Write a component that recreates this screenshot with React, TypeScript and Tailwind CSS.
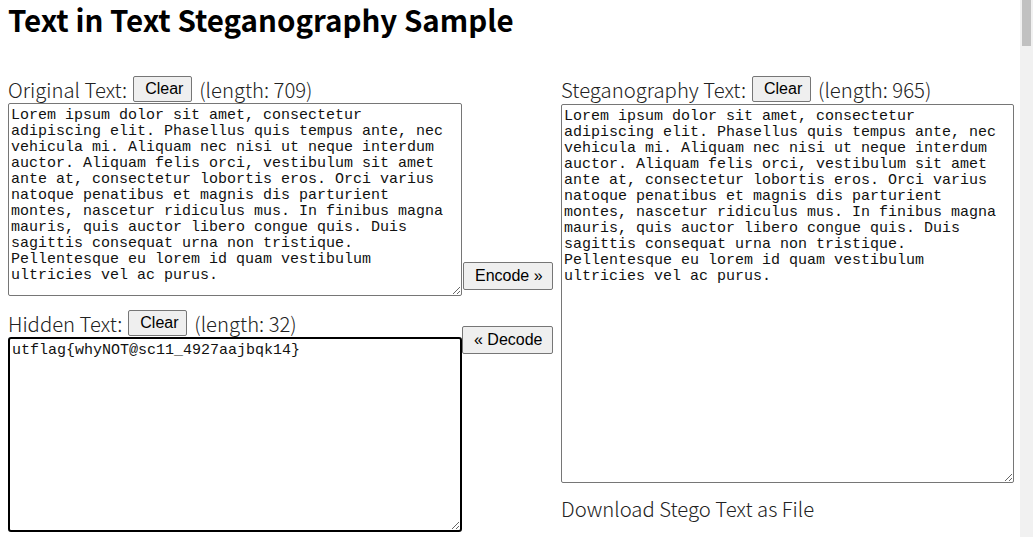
import React from "react";

const lorem =
  "Lorem ipsum dolor sit amet, consectetur adipiscing elit. Phasellus quis tempus ante, nec vehicula mi. Aliquam nec nisi ut neque interdum auctor. Aliquam felis orci, vestibulum sit amet ante at, consectetur lobortis eros. Orci varius natoque penatibus et magnis dis parturient montes, nascetur ridiculus mus. In finibus magna mauris, quis auctor libero congue quis. Duis sagittis consequat urna non tristique. Pellentesque eu lorem id quam vestibulum ultricies vel ac purus.";

const labelCls =
  "text-[20.3px] leading-[26px] text-[#222] font-light [font-family:'Noto_Sans_CJK_JP',sans-serif] flex items-center whitespace-nowrap";
const btnCls =
  "bg-[#efefef] border border-[#767676] rounded-[2px] text-[16px] leading-[18px] text-black [font-family:'Liberation_Sans',Arial,sans-serif] px-[11px] py-[3px] whitespace-nowrap";
const clearCls = btnCls + " h-[26px] w-[59px] px-0 ml-[6px] mr-[7px] pt-[3px]";
const taCls =
  "block bg-white resize text-[15px] leading-[16px] text-[#111] [font-family:'Liberation_Mono',monospace] px-[2px] pt-[4px] pb-[2px] outline-none";

export default function App() {
  return (
    <div className="bg-white px-[8px] [font-family:'Noto_Sans_CJK_JP',sans-serif]">
      <h1 className="m-0 text-[29.5px] leading-[38px] font-bold text-black [font-family:'Noto_Sans_CJK_JP',sans-serif]">
        Text in Text Steganography Sample
      </h1>
      <div className="flex mt-[38px]">
        <div className="w-[455px] shrink-0 flex flex-col">
          <div className={labelCls}>
            <span>Original Text:</span>
            <button className={clearCls}>Clear</button>
            <span>(length: 709)</span>
          </div>
          <textarea
            className={taCls + " border border-[#767676] rounded-[2px] w-[454px] h-[193px] mt-[1px]"}
            defaultValue={lorem}
          />
          <div className={labelCls + " mt-[14px]"}>
            <span>Hidden Text:</span>
            <button className={clearCls}>Clear</button>
            <span>(length: 32)</span>
          </div>
          <textarea
            className={taCls + " border-2 border-black rounded-[3px] w-[454px] h-[195px] mt-[1px] px-[1px] pt-[4px]"}
            defaultValue="utflag{whyNOT@sc11_4927aajbqk14}"
          />
        </div>
        <div className="w-[98px] shrink-0 flex flex-col items-start">
          <button className={btnCls + " mt-[186px] w-[90px] px-0 py-[4px]"}>Encode »</button>
          <button className={btnCls + " mt-[36px] ml-[-1px] w-[91px] px-0 py-[4px]"}>« Decode</button>
        </div>
        <div className="shrink-0 flex flex-col">
          <div className={labelCls}>
            <span>Steganography Text:</span>
            <button className={clearCls}>Clear</button>
            <span>(length: 965)</span>
          </div>
          <textarea
            className={taCls + " border border-[#767676] rounded-[2px] w-[453px] h-[379px] mt-[2px]"}
            defaultValue={lorem}
          />
          <div className="mt-[12px] text-[20.3px] leading-[26px] text-[#222] font-light">
            Download Stego Text as File
          </div>
        </div>
      </div>
      <div className="h-[200px]" />
      <div className="fixed top-0 right-0 h-full w-[13px] bg-[#f1f1f1]">
        <div className="ml-[2px] w-[9px] h-[46px] bg-[#c1c1c1]" />
      </div>
    </div>
  );
}
